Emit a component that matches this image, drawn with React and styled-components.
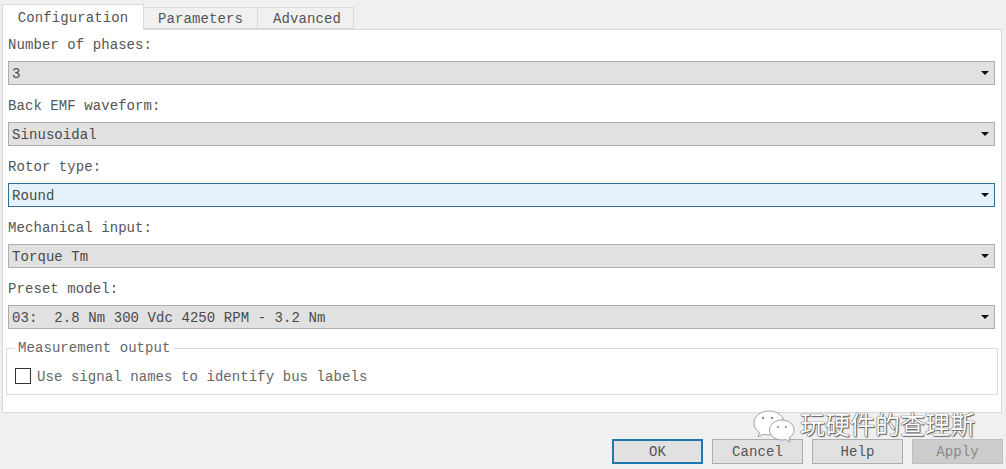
import React from "react";
import styled, { createGlobalStyle } from "styled-components";

const Global = createGlobalStyle`
  html, body { margin: 0; padding: 0; background: #f0f0f0; overflow: hidden; }
  body { font-family: "Liberation Mono", monospace; font-size: 14px; color: #333; }
`;
const Page = styled.div`
  position: relative; width: 1006px; height: 469px; box-sizing: border-box; padding: 4px 4px 0 2px;
`;
const TabBar = styled.div`
  display: flex; align-items: flex-end; height: 25px;
`;
const Tab = styled.div`
  box-sizing: border-box;
  width: ${p => p.$w}px;
  height: ${p => (p.$active ? 26 : 22)}px;
  margin-bottom: ${p => (p.$active ? -1 : 0)}px;
  position: relative;
  z-index: ${p => (p.$active ? 1 : 0)};
  display: flex; align-items: center; justify-content: center;
  padding-left: ${p => p.$shift || 0}px;
  padding-top: ${p => (p.$active ? 0 : 2)}px;
  letter-spacing: 0.1px;
  background: ${p => (p.$active ? "#fff" : "#f0f0f0")};
  border: 1px solid #d9d9d9;
  border-left-width: ${p => (p.$active || p.$first ? 1 : 0)}px;
  border-bottom-width: ${p => (p.$active ? 0 : 1)}px;
  color: #555;
`;
const Panel = styled.div`
  box-sizing: border-box; height: 384px; background: #fff; border: 1px solid #d9d9d9;
  padding: 0 6px 0 5px; display: flex; flex-direction: column; gap: 6px;
`;
const Field = styled.div`display: flex; flex-direction: column;`;
const Label = styled.div`
  box-sizing: border-box; height: 31px; line-height: 30px; letter-spacing: 0.07px; color: #555;
`;
const Select = styled.div`
  box-sizing: border-box; height: 24px; display: flex; align-items: center; justify-content: space-between;
  padding: 1px 5px 0 3px; white-space: pre; letter-spacing: 0.07px; color: #4a4a4a;
  background: ${p => (p.$focus ? "#e5f1fb" : "#e1e1e1")};
  border: 1px solid ${p => (p.$focus ? "#2f6f8f" : "#adadad")};
`;
const Caret = styled.span`
  width: 0; height: 0; border-left: 4px solid transparent; border-right: 4px solid transparent;
  border-top: 4px solid #111; flex: none; margin-top: -1px;
`;
const Group = styled.fieldset`
  box-sizing: border-box; height: 55px; margin: 5px -3px 0 -2px; padding: 12px 8px 0; border: 1px solid #dcdcdc;
  display: flex; align-items: flex-start; gap: 6px; min-width: 0;
`;
const Legend = styled.legend`
  margin-left: 0; padding: 0 3px; letter-spacing: 0.07px; color: #666; line-height: 16px;
`;
const Check = styled.span`
  box-sizing: border-box; width: 16px; height: 16px; border: 1px solid #333; background: #fff; flex: none;
`;
const CheckText = styled.span`letter-spacing: 0.07px; color: #666; line-height: 19px;`;
const Buttons = styled.div`
  display: flex; justify-content: flex-end; gap: 9px; margin-top: 26px; margin-right: -1px;
`;
const Button = styled.div`
  box-sizing: border-box; width: 91px; height: 25px; display: flex; align-items: center; justify-content: center;
  letter-spacing: 0.07px;
  background: ${p => (p.$disabled ? "#cccccc" : "#e1e1e1")};
  color: ${p => (p.$disabled ? "#8a8a8a" : "#555")};
  border: ${p => (p.$primary ? "2px solid #1f78ae" : "1px solid " + (p.$disabled ? "#bfbfbf" : "#adadad"))};
`;
const Watermark = styled.div`
  position: absolute; left: 752px; top: 409px; display: flex; align-items: flex-start; gap: 5px; z-index: 2;
`;
const WatermarkText = styled.span`
  font-family: "Noto Sans CJK SC", sans-serif; font-size: 25px; line-height: 30px; color: #fff; margin-top: -1px;
  text-shadow: 0 0 1px #444, 0 0 1px #444, 1px 1px 1px #666;
`;

const WeChat = () => (
  <svg width="43" height="34" viewBox="0 0 43 34" fill="#fff" stroke="#8a8a8a" strokeWidth="0.8">
    <path d="M17 2C8 2 2 7.500 2 14c0 4 2 7 5.500 9.500L6 28l5.500-2.800c1.800.5 3.500.8 5.500.8 C24 26 32 21 32 14 32 7.500 26 2 17 2z" />
    <path d="M30 11c-7 0-12.500 4.500-12.500 10s5.500 10 12.500 10c1.300 0 2.600-.2 3.800-.5L38 33l-1-4c3-2 5-4.800 5-8 0-5.500-5.500-10-12-10z" />
    <circle cx="11" cy="9" r="1.200" fill="#888" stroke="none" />
    <circle cx="20" cy="9" r="1.200" fill="#888" stroke="none" />
    <circle cx="26" cy="18" r="1" fill="#888" stroke="none" />
    <circle cx="34" cy="18" r="1" fill="#888" stroke="none" />
  </svg>
);

const fields = [
  ["Number of phases:", "3"],
  ["Back EMF waveform:", "Sinusoidal"],
  ["Rotor type:", "Round", true],
  ["Mechanical input:", "Torque Tm"],
  ["Preset model:", "03:  2.8 Nm 300 Vdc 4250 RPM - 3.2 Nm"],
];

export default function App() {
  return (
    <Page>
      <Global />
      <TabBar>
        <Tab $w={142} $active $first>Configuration</Tab>
        <Tab $w={114}>Parameters</Tab>
        <Tab $w={96} $shift={3}>Advanced</Tab>
      </TabBar>
      <Panel>
        {fields.map(([label, value, focus]) => (
          <Field key={label}>
            <Label>{label}</Label>
            <Select $focus={focus}>
              <span>{value}</span>
              <Caret />
            </Select>
          </Field>
        ))}
        <Group>
          <Legend>Measurement output</Legend>
          <Check />
          <CheckText>Use signal names to identify bus labels</CheckText>
        </Group>
      </Panel>
      <Buttons>
        <Button $primary>OK</Button>
        <Button>Cancel</Button>
        <Button>Help</Button>
        <Button $disabled>Apply</Button>
      </Buttons>
      <Watermark>
        <WeChat />
        <WatermarkText>玩硬件的查理斯</WatermarkText>
      </Watermark>
    </Page>
  );
}
